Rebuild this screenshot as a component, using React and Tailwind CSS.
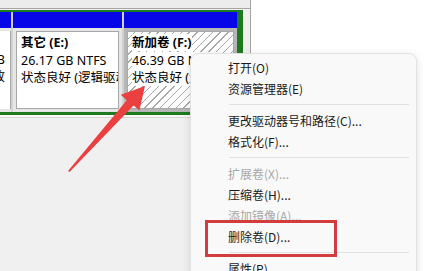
import React from 'react'

const menu = [
  { label: '打开(O)' },
  { label: '资源管理器(E)' },
  { sep: true },
  { label: '更改驱动器号和路径(C)...' },
  { label: '格式化(F)...' },
  { sep: true },
  { label: '扩展卷(X)...', disabled: true },
  { label: '压缩卷(H)...' },
  { label: '添加镜像(A)...', disabled: true },
  { label: '删除卷(D)...' },
  { sep: true },
  { label: '属性(P)' },
]

function Partition({ width, hatched, children }) {
  return (
    <div className={`flex flex-col ${width}`}>
      <div className="h-[16px] bg-[#0606e8]" />
      <div className={`flex-1 p-[3px] ${hatched ? 'bg-[#b6b6b6]' : 'bg-[#e6e6e6]'}`}>
        <div
          className={`h-full border border-[#a8a8a8] pl-[4px] pt-[2px] text-[12.5px] leading-[17.5px] text-black overflow-hidden whitespace-nowrap ${
            hatched
              ? 'bg-[repeating-linear-gradient(135deg,#ffffff_0px,#ffffff_4.5px,#a8a8a8_4.5px,#a8a8a8_5.5px)]'
              : 'bg-white'
          }`}
        >
          {children}
        </div>
      </div>
    </div>
  )
}

export default function App() {
  return (
    <div className="relative w-[439px] h-[271px] overflow-hidden bg-white font-['Segoe_UI','Noto_Sans','Noto_Sans_CJK_SC',sans-serif]">
      <div className="flex h-full">
        <div className="w-[251px] h-full bg-[#f0f0f0] border-r border-[#a4a4a4] flex flex-col">
          <div className="h-[9px] bg-[#ececec] border-b border-[#a4a4a4]" />
          <div className="h-px bg-[#f4f4f4]" />
          <div className="w-[243px] h-[105px] flex gap-[2px] bg-[#d2d2d2] border-t-2 border-b-[3px] border-r-[6px] border-[#1e7a1e]">
            {/* D: clipped on the left */}
            <div className="flex flex-col w-[11px]">
              <div className="h-[16px] bg-[#0606e8]" />
              <div className="flex-1 pt-[3px] pb-[3px] bg-[#e6e6e6]">
                <div className="h-full bg-white border-r border-[#a8a8a8] pt-[2px] pr-[5px] flex flex-col items-end text-[12.5px] leading-[17.5px] text-black overflow-hidden whitespace-nowrap">
                  <span className="font-bold">&nbsp;</span>
                  <span>GB</span>
                  <span>故</span>
                </div>
              </div>
            </div>
            <Partition width="w-[109px]">
              <div className="font-bold">其它 (E:)</div>
              <div>26.17 GB NTFS</div>
              <div>状态良好 (逻辑驱动器)</div>
            </Partition>
            <Partition width="w-[113px]" hatched>
              <div><span className="bg-white font-bold">新加卷 (F:)</span></div>
              <div><span className="bg-white">46.39 GB NTFS</span></div>
              <div><span className="bg-white">状态良好 (逻辑驱动器)</span></div>
            </Partition>
          </div>
          <div className="h-[2px] bg-[#f8f8f8]" />
          <div className="border-t border-[#d6d6d6]" />
        </div>
        <div className="flex-1" />
      </div>

      {/* context menu */}
      <div className="absolute left-[190px] top-[53px] w-[227px] h-[240px] rounded-lg border border-[#e2e2e2] bg-[#f9f9f9] shadow-[0_2px_8px_rgba(0,0,0,0.12)] pt-[3px] text-[12px] font-['Segoe_UI','Noto_Sans_CJK_SC','Noto_Sans',sans-serif]">
        {menu.map((item, i) =>
          item.sep ? (
            <div key={i} className="h-[11px] flex items-center">
              <div className="ml-[38px] mr-[7px] h-px flex-1 bg-[#e0e0e0]" />
            </div>
          ) : (
            <div
              key={i}
              className={`h-[21px] flex items-center pl-[37px] ${item.disabled ? 'text-[#a8a8a8]' : 'text-[#1a1a1a]'}`}
            >
              {item.label}
            </div>
          )
        )}
      </div>

      {/* highlight box */}
      <div className="absolute left-[205px] top-[220px] w-[132px] h-[37px] border-[3px] border-[#d23c3c]" />

      {/* arrow */}
      <svg className="absolute left-0 top-0" width="439" height="271" viewBox="0 0 439 271">
        <polygon
          points="68,171 126.8,100.2 120.8,94.8 145,86 139.4,110.6 133.6,105.4 69.5,172"
          fill="#ea4040"
        />
      </svg>
    </div>
  )
}
